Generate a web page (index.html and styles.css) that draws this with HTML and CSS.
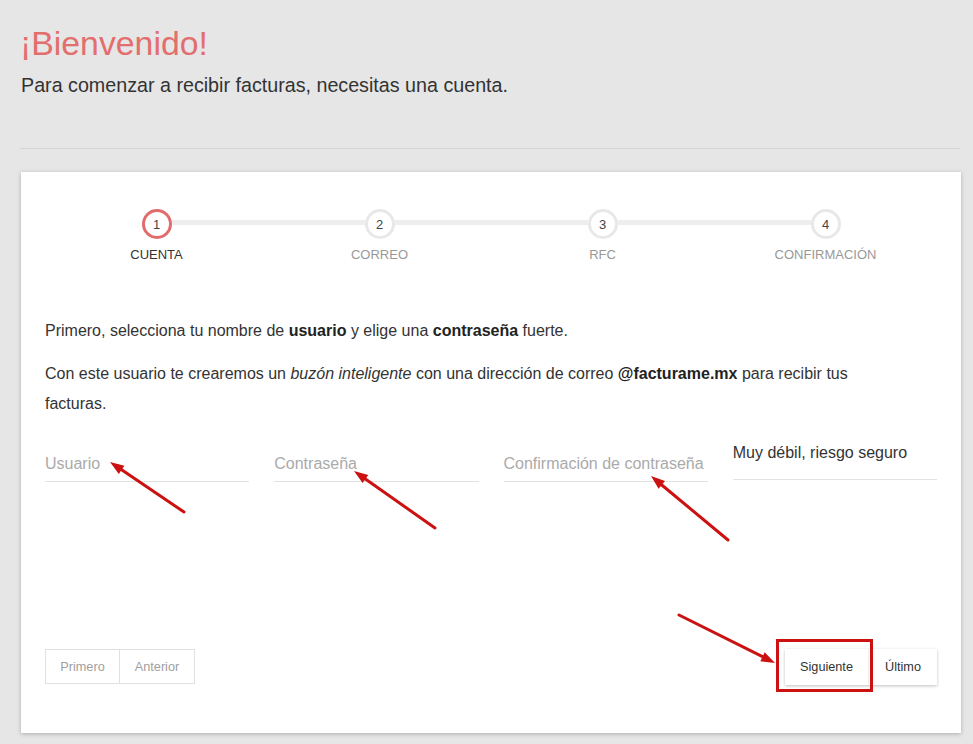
FILE: index.html
```html
<!DOCTYPE html>
<html lang="es">
<head>
<meta charset="utf-8">
<title>Bienvenido</title>
<link rel="stylesheet" href="styles.css">
</head>
<body>
<div class="page">
  <h1 class="title">¡Bienvenido!</h1>
  <p class="subtitle">Para comenzar a recibir facturas, necesitas una cuenta.</p>
  <hr class="divider">
  <div class="card">
    <div class="stepper">
      <div class="step active first">
        <div class="track"><span class="bar"></span><span class="dot">1</span><span class="bar"></span></div>
        <div class="label">CUENTA</div>
      </div>
      <div class="step">
        <div class="track"><span class="bar"></span><span class="dot">2</span><span class="bar"></span></div>
        <div class="label">CORREO</div>
      </div>
      <div class="step">
        <div class="track"><span class="bar"></span><span class="dot">3</span><span class="bar"></span></div>
        <div class="label">RFC</div>
      </div>
      <div class="step last">
        <div class="track"><span class="bar"></span><span class="dot">4</span><span class="bar"></span></div>
        <div class="label">CONFIRMACIÓN</div>
      </div>
    </div>

    <p class="text first-p">Primero, selecciona tu nombre de <b>usuario</b> y elige una <b>contraseña</b> fuerte.</p>
    <p class="text">Con este usuario te crearemos un <i>buzón inteligente</i> con una dirección de correo <b>@facturame.mx</b> para recibir tus facturas.</p>

    <div class="fields">
      <div class="field placeholder">Usuario</div>
      <div class="field placeholder">Contraseña</div>
      <div class="field placeholder">Confirmación de contraseña</div>
      <div class="field strength">Muy débil, riesgo seguro</div>
    </div>

    <div class="nav">
      <div class="group muted">
        <span class="btn">Primero</span><span class="btn">Anterior</span>
      </div>
      <div class="group raised">
        <span class="btn">Siguiente</span><span class="btn">Último</span>
      </div>
    </div>
  </div>
</div>

<svg class="annotations" width="973" height="744" viewBox="0 0 973 744">
  <g stroke="#cc1111" stroke-width="3" stroke-linecap="round" fill="none">
    <line x1="184" y1="512" x2="121.6" y2="469.8"/>
    <line x1="435" y1="528" x2="365.4" y2="479"/>
    <line x1="728" y1="540" x2="661.8" y2="485"/>
    <line x1="679" y1="615" x2="762.5" y2="656.7"/>
    <rect x="777.5" y="640.5" width="94" height="50"/>
  </g>
  <g fill="#cc1111">
    <polygon points="110,462 124.4,465.7 118.8,474"/>
    <polygon points="354,471 368.3,475 362.6,483.1"/>
    <polygon points="651,476 665,481.1 658.6,488.8"/>
    <polygon points="775,663 760.3,661.2 764.7,652.2"/>
  </g>
</svg>
</body>
</html>
```
FILE: styles.css
```css
html, body {
  margin: 0;
  padding: 0;
}
body {
  background: #e6e6e6;
  font-family: "Liberation Sans", Arial, sans-serif;
  color: #333;
  position: relative;
  width: 973px;
  height: 744px;
  overflow: hidden;
}
.page {
  padding: 23px 13px 0 20px;
}
.title {
  margin: 0;
  font-size: 33.8px;
  line-height: 40px;
  font-weight: normal;
  color: #e36e6e;
}
.subtitle {
  margin: 10px 0 0 1px;
  font-size: 19.7px;
  line-height: 24px;
  color: #333;
}
.divider {
  margin: 51px 0 0 0;
  border: 0;
  height: 1px;
  background: #d3d3d3;
}
.card {
  margin: 23px 0 0 1px;
  width: 940px;
  box-sizing: border-box;
  background: #fff;
  box-shadow: 0 1px 4px rgba(0, 0, 0, 0.25);
  padding: 37px 24px 48px 24px;
}
.stepper {
  display: grid;
  grid-template-columns: repeat(4, 1fr);
}
.step {
  display: flex;
  flex-direction: column;
  align-items: center;
}
.track {
  display: flex;
  align-items: center;
  width: 100%;
  height: 30px;
}
.bar {
  flex: 1;
  height: 5px;
  background: #eeeeee;
  margin-top: -3px;
}
.first .bar:first-child,
.last .bar:last-child {
  background: transparent;
}
.dot {
  width: 24px;
  height: 24px;
  border: 3px solid #e8e8e8;
  border-radius: 50%;
  background: #fff;
  display: flex;
  align-items: center;
  justify-content: center;
  font-size: 13px;
  color: #444;
  flex: none;
}
.active .dot {
  border-color: #e26b6b;
}
.label {
  margin-top: 8px;
  font-size: 13px;
  line-height: 16px;
  color: #999;
}
.active .label {
  color: #333;
}
.text {
  margin: 13px 0 0 0;
  max-width: 850px;
  font-size: 16px;
  line-height: 30px;
  color: #333;
}
.text.first-p {
  margin-top: 53px;
}
.text b {
  font-weight: bold;
  color: #222;
}
.fields {
  margin-top: 24px;
  display: grid;
  grid-template-columns: repeat(4, 1fr);
  column-gap: 25px;
  align-items: start;
}
.field {
  font-size: 16px;
  line-height: 20px;
  border-bottom: 1px solid #e2e2e2;
  white-space: nowrap;
}
.placeholder {
  color: #aaa;
  padding: 11px 0 7px 0;
}
.strength {
  color: #333;
  padding: 0 0 16px 0;
}
.nav {
  margin-top: 167px;
  display: flex;
  justify-content: space-between;
  align-items: flex-start;
}
.group {
  display: flex;
}
.btn {
  height: 35px;
  box-sizing: border-box;
  display: flex;
  align-items: center;
  justify-content: center;
  font-size: 12.7px;
  padding: 0 15px;
  background: #fff;
}
.muted .btn {
  color: #a0a0a0;
  width: 75px;
  border: 1px solid #e0e0e0;
}
.muted .btn + .btn {
  margin-left: -1px;
  width: 76px;
}
.raised {
  box-shadow: 0 1px 3px rgba(0, 0, 0, 0.25);
  margin-top: 0;
}
.raised .btn {
  color: #333;
  height: 36px;
}
.raised .btn:first-child {
  width: 84px;
  border-right: 1px solid #eee;
}
.raised .btn:last-child {
  width: 68px;
}
.annotations {
  position: absolute;
  left: 0;
  top: 0;
  pointer-events: none;
}
```
